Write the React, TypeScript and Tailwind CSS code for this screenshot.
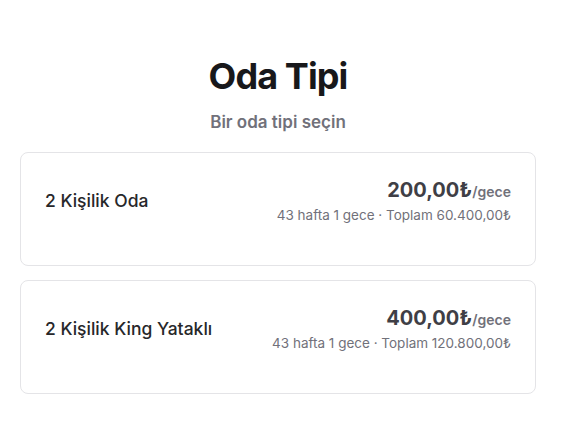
import React from 'react';

interface RoomType {
  name: string;
  price: string;
  summary: string;
}

const rooms: RoomType[] = [
  { name: '2 Kişilik Oda', price: '200,00₺', summary: '43 hafta 1 gece · Toplam 60.400,00₺' },
  { name: '2 Kişilik King Yataklı', price: '400,00₺', summary: '43 hafta 1 gece · Toplam 120.800,00₺' },
];

export default function App() {
  return (
    <div className="min-h-screen bg-white" style={{ fontFamily: 'Inter, "Noto Sans", sans-serif' }}>
      <div className="w-[556px] px-5 pt-[56px]">
        <div className="text-center">
          <h1 className="text-[36px] leading-[40px] font-bold text-[#18181b] tracking-tight">Oda Tipi</h1>
          <p className="mt-[14px] text-[17px] leading-6 font-semibold text-[#71717a]">Bir oda tipi seçin</p>
        </div>

        <div className="mt-[18px] flex flex-col gap-[14px]">
          {rooms.map((room) => (
            <button
              key={room.name}
              className="flex h-[114px] w-full items-start rounded-lg border border-[#e4e4e7] bg-white px-6 pt-[24px] text-left"
            >
              <div className="flex w-full items-center justify-between">
                <span className="text-[17.5px] font-medium text-[#27272a]">{room.name}</span>
                <div className="text-right">
                  <div className="leading-[26px]">
                    <span className="text-[20px] font-bold text-[#3f3f46]">{room.price}</span>
                    <span className="text-[14px] font-semibold text-[#71717a]">/gece</span>
                  </div>
                  <div className="text-[13.5px] leading-5 text-[#71717a]">{room.summary}</div>
                </div>
              </div>
            </button>
          ))}
        </div>
      </div>
    </div>
  );
}
